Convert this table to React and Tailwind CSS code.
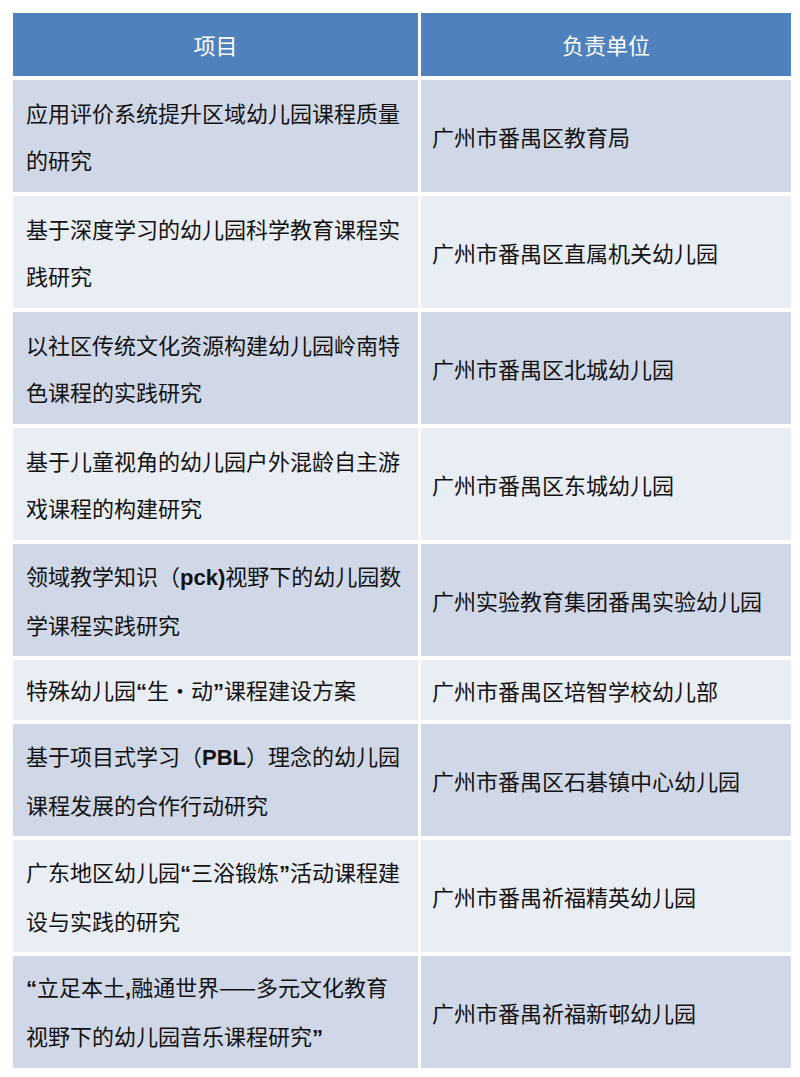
import React from 'react';

const B = ({ children }) => (
  <span className="font-bold" style={{ fontFamily: '"Liberation Sans", Arial, sans-serif' }}>{children}</span>
);

const rows = [
  {
    project: <>应用评价系统提升区域幼儿园课程质量<br />的研究</>,
    unit: '广州市番禺区教育局',
  },
  {
    project: <>基于深度学习的幼儿园科学教育课程实<br />践研究</>,
    unit: '广州市番禺区直属机关幼儿园',
  },
  {
    project: <>以社区传统文化资源构建幼儿园岭南特<br />色课程的实践研究</>,
    unit: '广州市番禺区北城幼儿园',
  },
  {
    project: <>基于儿童视角的幼儿园户外混龄自主游<br />戏课程的构建研究</>,
    unit: '广州市番禺区东城幼儿园',
  },
  {
    project: <>领域教学知识（<B>pck)</B>视野下的幼儿园数<br />学课程实践研究</>,
    unit: '广州实验教育集团番禺实验幼儿园',
  },
  {
    project: <>特殊幼儿园<B>“</B>生・动<B>”</B>课程建设方案</>,
    unit: '广州市番禺区培智学校幼儿部',
    short: true,
  },
  {
    project: <>基于项目式学习（<B>PBL</B>）理念的幼儿园<br />课程发展的合作行动研究</>,
    unit: '广州市番禺区石碁镇中心幼儿园',
  },
  {
    project: <>广东地区幼儿园<B>“</B>三浴锻炼<B>”</B>活动课程建<br />设与实践的研究</>,
    unit: '广州市番禺祈福精英幼儿园',
  },
  {
    project: <><B>“</B>立足本土<B>,</B>融通世界——多元文化教育<br />视野下的幼儿园音乐课程研究<B>”</B></>,
    unit: '广州市番禺祈福新邨幼儿园',
  },
];

export default function App() {
  return (
    <div
      className="w-[800px] h-[1077px] bg-white pt-[13px] pl-[13px]"
      style={{ fontFamily: '"Noto Sans CJK SC", "Liberation Sans", sans-serif' }}
    >
      <div className="grid grid-cols-[405px_370px] gap-x-[3px] gap-y-[4px] w-[778px]">
        <div className="h-[63px] bg-[#4f81bd] text-white text-[22px] flex items-center justify-center">项目</div>
        <div className="h-[63px] bg-[#4f81bd] text-white text-[22px] flex items-center justify-center">负责单位</div>
        {rows.map((r, i) => {
          const bg = i % 2 === 0 ? 'bg-[#d0d8e8]' : 'bg-[#e9edf4]';
          const h = r.short ? 'h-[60px]' : 'h-[112px]';
          return (
            <React.Fragment key={i}>
              <div className={`${bg} ${h} flex items-center pl-[13px] text-[22px] leading-[47px] text-[#111] whitespace-nowrap`}>
                <div>{r.project}</div>
              </div>
              <div className={`${bg} ${h} flex items-center pl-[11px] text-[22px] leading-[47px] text-[#111] whitespace-nowrap`}>
                {r.unit}
              </div>
            </React.Fragment>
          );
        })}
      </div>
    </div>
  );
}
